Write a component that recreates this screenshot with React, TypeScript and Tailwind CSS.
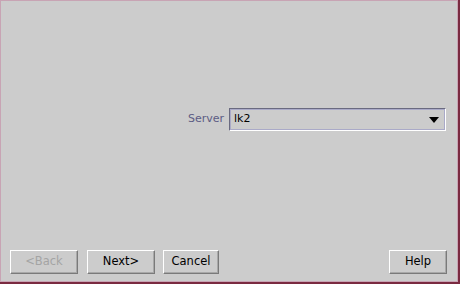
const font = { fontFamily: '"DejaVu Sans", sans-serif' };

function Btn({ label, className, disabled }: { label: string; className: string; disabled?: boolean }) {
  return (
    <button
      className={`${className} h-[24px] bg-[#cccccc] border border-t-white border-l-white border-r-[#7a7a7a] border-b-[#7a7a7a] shadow-[inset_-1px_-1px_0_#a8a8a8] text-[11.5px] leading-none ${
        disabled ? "text-[#a4a4a4]" : "text-black"
      }`}
    >
      {label}
    </button>
  );
}

export default function App() {
  return (
    <div className="w-[460px] h-[284px] border-r-2 border-b-2 border-[#7a2a40]" style={font}>
      <div className="h-full border border-[#c8a4b4] bg-[#cccccc] flex flex-col">
        <div className="flex-1 flex items-start justify-end pr-[11px] pt-[107px]">
          <div className="flex items-center gap-[5px]">
            <span className="text-[11px] text-[#5c5c84]">Server</span>
            <div className="w-[217px] h-[23px] border border-b-white border-r-white border-t-[#6a6a80] border-l-[#6a6a80]">
              <div className="h-full border border-[#aaaac8] bg-[#cccccc] flex items-center justify-between pl-[3px] pr-[5px]">
                <span className="text-[11px] text-black">lk2</span>
                <svg width="10" height="6" viewBox="0 0 10 6">
                  <polygon points="0,0 10,0 5,6" fill="#000" />
                </svg>
              </div>
            </div>
          </div>
        </div>
        <div className="flex items-center pl-[9px] pr-[10px] pb-[7px]">
          <Btn label="<Back" className="w-[68px]" disabled />
          <Btn label="Next>" className="w-[68px] ml-[9px]" />
          <Btn label="Cancel" className="w-[56px] ml-[8px]" />
          <div className="flex-1" />
          <Btn label="Help" className="w-[58px]" />
        </div>
      </div>
    </div>
  );
}
